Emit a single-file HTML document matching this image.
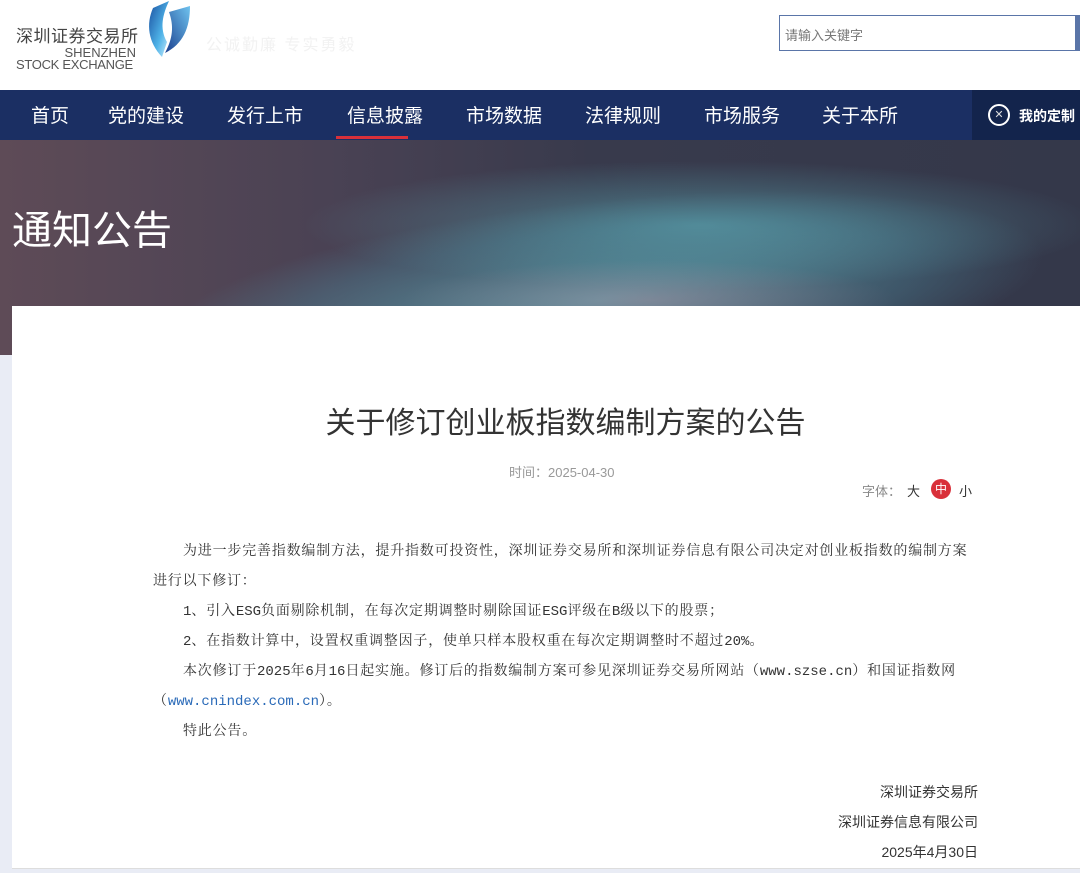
<!DOCTYPE html>
<html><head><meta charset="utf-8"><style>
*{margin:0;padding:0;box-sizing:border-box}
body{width:1080px;height:873px;overflow:hidden;background:#e9ecf5;font-family:"Liberation Sans","Noto Sans CJK SC",sans-serif;position:relative}
.hdr{position:absolute;left:0;top:0;width:1080px;height:90px;background:#fff}
.nav{position:absolute;left:0;top:90px;width:1080px;height:50px;background:#1b2f63}
.nav span{position:absolute;top:11px;color:#fff;font-size:19px}
.banner{position:absolute;left:0;top:140px;width:1080px;height:215px;overflow:hidden;
background:linear-gradient(90deg,#5e4b57 0%,#4a4254 30%,#383a4c 55%,#34384a 100%)}
.box{position:absolute;left:12px;top:306px;width:1068px;height:563px;background:#fff;border-bottom:1px solid #ddd}
.p{position:absolute;font-family:"Noto Serif CJK SC",serif;font-size:14px;color:#333;white-space:nowrap;letter-spacing:0.8px}
.m{font-family:"Liberation Mono",monospace;letter-spacing:0}
.s{position:absolute;right:102px;font-size:14px;color:#333;white-space:nowrap}
</style></head><body>
<div class="hdr">
 <div style="position:absolute;left:16px;top:22px;font-size:17px;color:#444;letter-spacing:0.5px">深圳证券交易所</div>
 <div style="position:absolute;left:16px;width:120px;text-align:right;top:47px;font-size:13px;color:#555;line-height:12px">SHENZHEN</div>
 <div style="position:absolute;left:16px;top:59px;font-size:13px;color:#555;line-height:12px;letter-spacing:-0.3px">STOCK EXCHANGE</div>
 <svg style="position:absolute;left:145px;top:0" width="46" height="58" viewBox="0 0 46 58">
  <defs><linearGradient id="g" x1="0" y1="0" x2="1" y2="1"><stop offset="0" stop-color="#1a4fa0"/><stop offset="0.6" stop-color="#4fb3e8"/><stop offset="1" stop-color="#cfeefc"/></linearGradient>
  <linearGradient id="g2" x1="1" y1="0" x2="0" y2="1"><stop offset="0" stop-color="#6fc3ef"/><stop offset="1" stop-color="#1b3f8e"/></linearGradient></defs>
  <path d="M8 8 L24 1 C18 14 14 28 22 42 L17 57 C3 42 1 24 8 8Z" fill="url(#g)"/>
  <path d="M24 12 L45 6 C45 28 38 44 20 53 C28 38 29 26 24 12Z" fill="url(#g2)"/>
 </svg>
 <div style="position:absolute;left:206px;top:31px;font-size:16px;color:#f2f2f2;letter-spacing:2px">公诚勤廉 专实勇毅</div>
 <div style="position:absolute;left:779px;top:15px;width:301px;height:36px;border:1px solid #5a75a8;border-right:5px solid #5a75a8;background:#fff">
  <span style="position:absolute;left:5px;top:9px;font-size:13px;color:#777">请输入关键字</span></div>
</div>
<div class="nav">
 <span style="left:31px">首页</span><span style="left:108px">党的建设</span><span style="left:227px">发行上市</span>
 <span style="left:347px">信息披露</span><div style="position:absolute;left:336px;top:46px;width:72px;height:3px;background:#d9303a"></div>
 <span style="left:466px">市场数据</span><span style="left:585px">法律规则</span><span style="left:704px">市场服务</span><span style="left:822px">关于本所</span>
 <div style="position:absolute;left:972px;top:0;width:108px;height:50px;background:#13244c">
  <div style="position:absolute;left:16px;top:14px;width:22px;height:22px;border:2px solid #fff;border-radius:50%;color:#ddd;font-size:11px;text-align:center;line-height:18px">✕</div>
  <span style="position:absolute;left:47px;top:16px;font-size:14px;color:#fff;font-weight:bold">我的定制</span></div>
</div>
<div class="banner">
 <div style="position:absolute;left:150px;top:60px;width:900px;height:200px;border-radius:50%;background:radial-gradient(ellipse at 50% 50%,rgba(110,200,210,0.6),rgba(80,150,170,0.3) 50%,transparent 70%);transform:rotate(-6deg)"></div>
 <div style="position:absolute;left:300px;top:20px;width:800px;height:130px;border-radius:50%;background:radial-gradient(ellipse,rgba(100,190,200,0.5),transparent 70%)"></div>
 <div style="position:absolute;left:400px;top:120px;width:500px;height:80px;border-radius:50%;background:radial-gradient(ellipse,rgba(200,140,160,0.35),transparent 70%)"></div>
 <div style="position:absolute;left:12px;top:58px;font-size:40px;color:#fff">通知公告</div>
</div>
<div class="box">
 <div style="position:absolute;left:141px;width:825px;top:92px;text-align:center;font-size:30px;color:#333">关于修订创业板指数编制方案的公告</div>
 <div style="position:absolute;left:497px;top:156px;font-size:13px;color:#999">时间：2025-04-30</div>
 <div style="position:absolute;left:850px;top:175px;font-size:13px;color:#888">字体：</div>
 <div style="position:absolute;left:895px;top:175px;font-size:13px;color:#333">大</div>
 <div style="position:absolute;left:919px;top:173px;width:20px;height:20px;border-radius:50%;background:#d9303a;color:#fff;font-size:12px;text-align:center;line-height:20px">中</div>
 <div style="position:absolute;left:947px;top:175px;font-size:13px;color:#333">小</div>
</div>
<div class="p" style="left:183px;top:540px">为进一步完善指数编制方法，提升指数可投资性，深圳证券交易所和深圳证券信息有限公司决定对创业板指数的编制方案</div>
<div class="p" style="left:153px;top:570px">进行以下修订：</div>
<div class="p" style="left:183px;top:600px"><span class="m">1</span>、引入<span class="m">ESG</span>负面剔除机制，在每次定期调整时剔除国证<span class="m">ESG</span>评级在<span class="m">B</span>级以下的股票；</div>
<div class="p" style="left:183px;top:630px"><span class="m">2</span>、在指数计算中，设置权重调整因子，使单只样本股权重在每次定期调整时不超过<span class="m">20%</span>。</div>
<div class="p" style="left:183px;top:660px">本次修订于<span class="m">2025</span>年<span class="m">6</span>月<span class="m">16</span>日起实施。修订后的指数编制方案可参见深圳证券交易所网站（<span class="m">www.szse.cn</span>）和国证指数网</div>
<div class="p" style="left:153px;top:690px">（<span class="m" style="color:#2a6ab8">www.cnindex.com.cn</span>）。</div>
<div class="p" style="left:183px;top:720px">特此公告。</div>
<div class="s" style="top:782px">深圳证券交易所</div>
<div class="s" style="top:812px">深圳证券信息有限公司</div>
<div class="s" style="top:842px">2025年4月30日</div>
</body></html>
